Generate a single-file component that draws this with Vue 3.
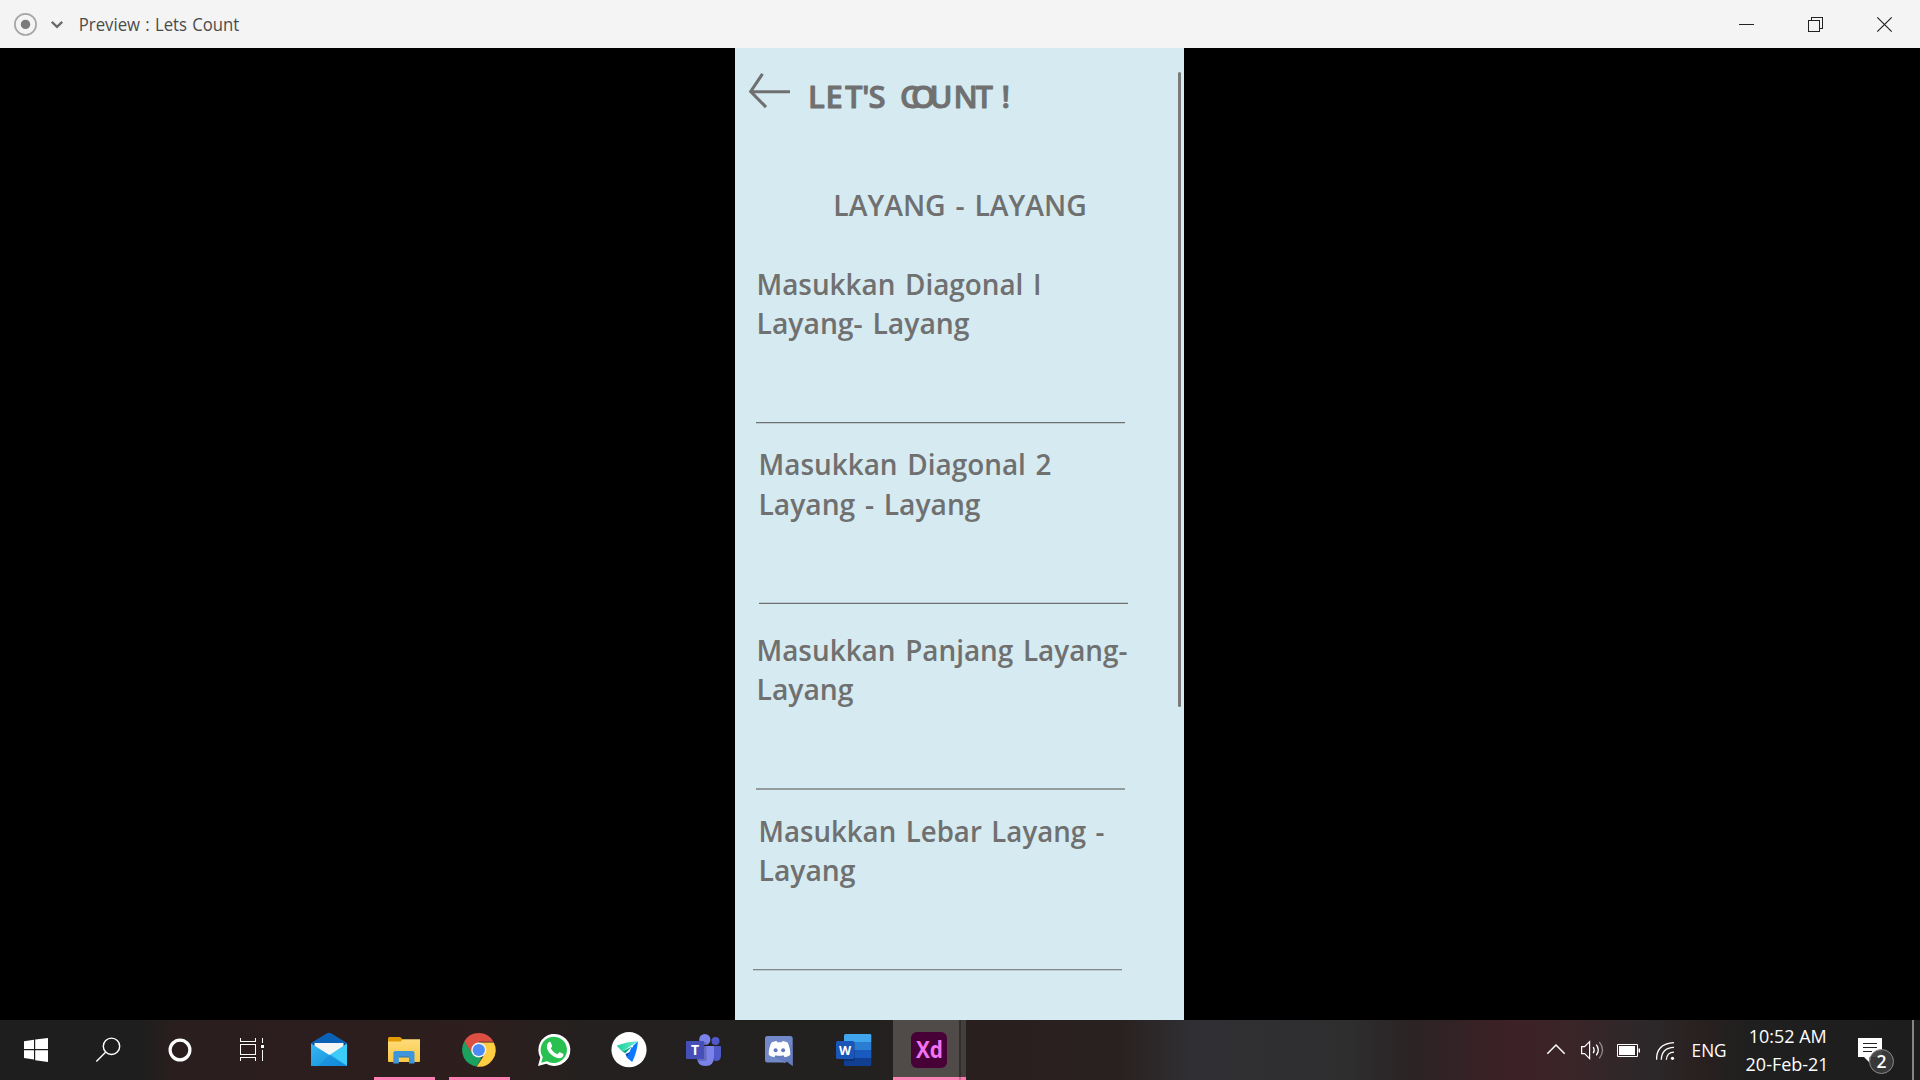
<script setup>
// Each line carries its drawn width so the label keeps the prototype's metrics.
const fields = [
  { id: 'd1', lines: [{ text: 'Masukkan Diagonal I', width: 285 }, { text: 'Layang- Layang', width: 213 }] },
  { id: 'd2', lines: [{ text: 'Masukkan Diagonal 2', width: 293 }, { text: 'Layang - Layang', width: 222 }] },
  { id: 'panjang', lines: [{ text: 'Masukkan Panjang Layang-', width: 371 }, { text: 'Layang', width: 97 }] },
  { id: 'lebar', lines: [{ text: 'Masukkan Lebar Layang -', width: 346 }, { text: 'Layang', width: 97 }] }
]
</script>

<template>
  <div class="screen">
    <header class="titlebar">
      <svg width="76" height="48" viewBox="0 0 76 48" fill="none">
        <circle cx="25.5" cy="24.4" r="10.6" stroke="#a6a6a6" stroke-width="1.7" />
        <circle cx="25.5" cy="24.4" r="4.7" fill="#7b7b7b" />
        <path d="M51.8 21.8 57 26.8 62.2 21.8" stroke="#6a6a6a" stroke-width="2.3" />
      </svg>
      <svg class="ui" width="200" height="48" viewBox="76 0 200 48">
        <text class="caption" x="78.8" y="31" font-size="18.6" fill="#4b4b4b" textLength="160.5" lengthAdjust="spacingAndGlyphs">Preview : Lets Count</text>
      </svg>
      <svg class="window-buttons" width="207" height="48" viewBox="1713 0 207 48" fill="none" stroke="#222" shape-rendering="crispEdges">
        <path d="M1739 24.5h15" />
        <path d="M1808.5 20.5h11v11h-11zM1811.5 20v-2.5h11v11h-2.5" />
        <path d="M1877.3 17.3l14.4 14.4M1891.7 17.3l-14.4 14.4" stroke-width="1.2" shape-rendering="auto" />
      </svg>
    </header>

    <main class="stage">
      <section class="phone">
        <div class="content">
          <svg class="heading" width="430" height="92" viewBox="735 48 430 92">
            <path d="M762.5 73.8 750.7 91.5 766 107.2M750.7 91.7H790" fill="none" stroke="#707070" stroke-width="3.1" />
            <text class="comic" y="107.6" x="808 825.5 845 862 868.5 880 900 911 929.5 953.5 975.5 1001.5 1020.5">LET'S COUNT!</text>
          </svg>
          <svg class="shape-name" width="449" height="80" viewBox="735 140 449 80">
            <text x="833.3" y="215.6" textLength="253.5" lengthAdjust="spacingAndGlyphs">LAYANG - LAYANG</text>
          </svg>
          <div v-for="f in fields" :key="f.id" class="field" :class="f.id">
            <svg v-for="(l, i) in f.lines" :key="i" class="line" width="390" height="39">
              <text x=".5" y="30" :textLength="l.width" lengthAdjust="spacingAndGlyphs">{{ l.text }}</text>
            </svg>
            <div class="rule"></div>
          </div>
        </div>
        <div class="scroll"><i></i></div>
      </section>
    </main>

    <footer class="taskbar">
      <svg width="72" height="60" viewBox="0 0 72 60">
        <path fill="#fff" d="M24 21.2 34 19.8V29H24zM35.2 19.6 48 17.9V29H35.2zM24 30.2h10v9.3L24 38.1zM35.2 30.2H48V42l-12.8-1.8z" />
      </svg>
      <svg width="72" height="60" viewBox="72 0 72 60" fill="none" stroke="#fff" stroke-width="1.4">
        <circle cx="111.5" cy="26.3" r="8.2" /><path d="M105.6 32.2 96.3 41.6" />
      </svg>
      <svg width="72" height="60" viewBox="144 0 72 60">
        <circle cx="180" cy="30" r="9.9" fill="none" stroke="#fff" stroke-width="3.2" />
      </svg>
      <svg width="75" height="60" viewBox="216 0 75 60" fill="none" stroke="#fff" shape-rendering="crispEdges">
        <path d="M240.5 18v3.5h15V18M240.5 24.5h15v10h-15zM240.5 41v-3.5h15V41M262.5 18v5M262.5 29.5V41" />
        <path fill="#fff" stroke="none" d="M261 25h3v3h-3z" />
      </svg>

      <svg width="75" height="60" viewBox="291 0 75 60">
        <defs>
          <linearGradient id="mailBody" x1="0" y1="0" x2="1" y2="1"><stop stop-color="#36b8f0" /><stop offset="1" stop-color="#118bdc" /></linearGradient>
        </defs>
        <path fill="#0b61b5" d="M311 23 327 13.3q2-1.2 4 0L347 23l-2 8h-32z" />
        <path fill="#074488" d="M313 23h32v9h-32z" />
        <path fill="#f5f5f5" d="M314.5 23h29v7L329 38l-14.500-8z" />
        <path fill="#3bccf7" d="M347 23.5V46L322 40z" />
        <path fill="url(#mailBody)" d="M311 23.5 347 46H311z" />
        <path fill="#1688d8" d="M330 34.5 347 45.8V46h-29z" opacity=".55" />
      </svg>
      <svg class="running" width="75" height="60" viewBox="366 0 75 60">
        <defs>
          <linearGradient id="folder" x1="0" y1="0" x2="0" y2="1"><stop stop-color="#ffdc79" /><stop offset="1" stop-color="#f9c846" /></linearGradient>
        </defs>
        <path fill="#e19c05" d="M389 17h11l3 2.500V25h-15v-7z" />
        <path fill="url(#folder)" d="M388 21.5h12.500l2.500-2.200h17V41q0 1-1 1h-30q-1 0-1-1z" />
        <path fill="#3d96dc" d="M393.300 43.400V33q0-2 2-2h17.200q2 0 2 2v10.400H409V36.200h-10.200v7.200z" />
        <path fill="#1f76bd" d="M398.800 36.200H409v1.300h-10.200z" />
        <path fill="#ff80b3" d="M374 57h61v3h-61z" />
      </svg>
      <svg width="75" height="60" viewBox="441 0 75 60">
        <path fill="#dd4f43" d="M464.200 21.500A16.800 16.800 0 0 1 493.400 21.700H479l-6.500 12.500z" />
        <path fill="#1ba261" d="M464.300 21.500 472.700 34l6 3.300 3 .5-5 8.800A16.800 16.800 0 0 1 464.300 21.500z" />
        <path fill="#ffcd41" d="M479 22.400h14.800A16.800 16.800 0 0 1 476.700 46.700L485.500 33z" />
        <circle cx="478.800" cy="30" r="7.600" fill="#f1f1f1" /><circle cx="478.800" cy="30" r="6.100" fill="#4c8bf5" />
        <path fill="#ff80b3" d="M449 57h61v3h-61z" />
      </svg>
      <svg width="75" height="60" viewBox="516 0 75 60">
        <path fill="#fff" d="M538 46l2.300-8.400A16 16 0 1 1 546.200 43.700z" />
        <path fill="#28c151" d="M541.200 42.700l1.600-5.500A13.200 13.200 0 1 1 547 41.200z" />
        <path fill="#fff" d="M548.700 22.300c.8-.8 1.700-.6 2.100.2l1.300 3.200c.3.800-.8 1.900-1.300 2.500 1.500 3.100 3.900 4.900 6.700 6 .7-.6 1.400-2 2-2 1 .1 3 1.100 3.800 1.700.6.500-.3 3-1.900 3.800-2 .9-4.400.5-7.600-1.200-3.300-1.800-5.800-5.100-6.700-7.700-.7-2.500.1-5.300 1.600-6.500z" />
      </svg>
      <svg width="75" height="60" viewBox="591 0 75 60">
        <defs>
          <linearGradient id="wing"><stop stop-color="#18cf9d" /><stop offset="1" stop-color="#69efcf" /></linearGradient>
        </defs>
        <circle cx="629" cy="29.700" r="17.600" fill="#fff" />
        <path fill="url(#wing)" d="M616.700 25.700q10-4 21.300-4.400L622.300 31.400z" />
        <path fill="#07a887" d="M622.300 31.400 632 26.500l-6.700 6.700z" />
        <path fill="#0b78ff" d="M638 21.300q-1 11-5.800 20.700l-5.200-4.300 4.500-10.500z" />
        <path fill="#0749bb" d="M627 37.700l3-5.700-4.500 2z" />
        <circle cx="632" cy="26.500" r="1" fill="#fff" />
      </svg>
      <svg class="glyph" width="75" height="60" viewBox="666 0 75 60">
        <circle cx="715.500" cy="21" r="4" fill="#5059c9" />
        <path fill="#5059c9" d="M711 26h9q1 0 1 1v8.500q0 6-6.500 5.500z" />
        <circle cx="704.800" cy="19.500" r="5.600" fill="#7b83eb" />
        <path fill="#7b83eb" d="M697 26h16q1 0 1 1v10q0 9-8.500 9T697 37z" />
        <path fill="#000" opacity=".18" d="M697 22h8q1.500 0 1.500 1.500v16q0 1.500-1.500 1.500h-7.500z" />
        <rect x="686" y="21" width="18" height="18" rx="1" fill="#464eb8" />
        <text x="695" y="34.800" font-size="14" text-anchor="middle">T</text>
      </svg>
      <svg width="75" height="60" viewBox="741 0 75 60">
        <path fill="#7289c9" d="M767.500 16h22.700q2.500 0 2.500 2.500V46l-6-4.500-1.500 1.500-2-.4h-15.700q-2.500 0-2.500-2.500V18.500q0-2.500 2.500-2.500z" />
        <path fill="#5f74b6" d="M789 24l3.700 4v18l-6-4.500-1 .8-12-5.300z" opacity=".6" />
        <path fill="#fff" d="M771.500 22.500q3-1.500 5-1.500l.8 1.300h4.500l.8-1.300q2 0 5 1.500 3 5.500 2.600 12.500-2.700 2-5.500 2.200l-1.300-2q-4 1-7.800 0l-1.300 2q-2.800-.2-5.500-2.200-.4-7 2.700-12.500z" />
        <circle cx="775.600" cy="30.200" r="2" fill="#6477bd" /><circle cx="783.100" cy="30.200" r="2" fill="#6477bd" />
      </svg>
      <svg class="glyph" width="75" height="60" viewBox="816 0 75 60">
        <path fill="#41a5ee" d="M845.500 14H870q1.300 0 1.300 1.300V22H844v-6.500q0-1.500 1.500-1.500z" />
        <path fill="#2b7cd3" d="M844 22h27.300v8H844z" /><path fill="#185abd" d="M844 30h27.300v8H844z" />
        <path fill="#103f91" d="M844 38h27.300v6.700q0 1.300-1.300 1.300h-24.500q-1.500 0-1.500-1.500z" />
        <path fill="#000" opacity=".2" d="M844 22h11v17q0 2-2 2h-9z" />
        <rect x="836" y="21" width="18.300" height="18" rx="1.500" fill="#1a56b8" />
        <text x="845.100" y="34.600" font-size="12.500" text-anchor="middle">W</text>
      </svg>
      <svg class="glyph" width="75" height="60" viewBox="891 0 75 60">
        <path fill="#504b49" d="M893 0h66v60h-66z" /><path fill="#312e2d" d="M959 0h2v60h-2z" /><path fill="#433f3e" d="M961 0h5v60h-5z" />
        <rect x="911" y="12" width="36" height="36" rx="6" fill="#470137" />
        <text class="xd" x="916" y="38" font-size="22.500" textLength="27" lengthAdjust="spacingAndGlyphs">Xd</text>
        <path fill="#ff84b5" d="M893 57h66v3h-66z" /><path fill="#c9688f" d="M959 57h2v3h-2z" /><path fill="#f57eac" d="M961 57h5v3h-5z" />
      </svg>

      <svg class="tray ui" width="380" height="60" viewBox="1540 0 380 60" fill="none" stroke="#fff">
        <path stroke-width="1.500" d="M1547.300 33.700 1556 25l8.700 8.700" />
        <path stroke-width="1.200" d="M1581.600 26.600h3l5-5v17l-5-5h-3z" />
        <path stroke-width="1.300" d="M1593.200 27q2 3 0 6.200M1596.300 24.700q4 5.300 0 10.700" />
        <path stroke-width="1.300" opacity=".45" d="M1599.300 22q6.500 8 0 16.300" />
        <path d="M1617.500 24.500h20v12h-20z" /><path fill="#fff" stroke="none" d="M1619 26h16v9h-16zM1638.500 28.500h1.500v4h-1.500z" />
        <path stroke-width="1.300" d="M1656.600 39.800q-.5-16 17.400-17.200M1661.300 39.800q.3-12 12.700-12.400M1666.300 39.800q.5-7.500 7.700-7.700" />
        <circle cx="1672.500" cy="38.300" r="1.600" fill="#fff" stroke="none" />
        <g fill="#fff" stroke="none" font-size="18">
          <text x="1691.600" y="36.800" textLength="35" lengthAdjust="spacingAndGlyphs">ENG</text>
          <text x="1748.700" y="23" textLength="78" lengthAdjust="spacingAndGlyphs">10:52 AM</text>
          <text x="1745.600" y="51" textLength="83" lengthAdjust="spacingAndGlyphs">20-Feb-21</text>
        </g>
        <path fill="#fff" stroke="none" d="M1858 18h24v19h-12.500v5.500L1864 37h-6z" />
        <path stroke="#222" d="M1863 23.500h14M1863 27.500h14M1863 31.500h9" />
        <circle cx="1881.500" cy="41.500" r="12" fill="#3a3a3a" fill-opacity=".93" stroke="#8b8b8b" />
        <text x="1881.400" y="47.800" fill="#fff" stroke="none" font-size="17.500" font-weight="600" text-anchor="middle">2</text>
        <path stroke="#858585" stroke-width="2" d="M1913 0v60" />
      </svg>
    </footer>
  </div>
</template>

<style>
body { margin: 0; overflow: hidden; background: #000; }
</style>

<style scoped>
.screen { width: 1920px; height: 1080px; display: flex; flex-direction: column; background: #000; font-family: "Open Sans", "Noto Sans", sans-serif; }
svg { display: block; flex: none; }
.titlebar { height: 48px; flex: none; display: flex; background: #f4f4f4; }
.window-buttons { margin-left: auto; }
.ui text { font-family: "Open Sans", "Noto Sans", sans-serif; }
.caption { word-spacing: 1px; }
.stage { height: 972px; display: flex; padding-left: 735px; }
.phone { width: 449px; display: flex; background: #d5ebf1; color: #707070; overflow: hidden; }
.content { width: 443px; }
.comic { font-family: "Comic Sans MS", "Open Sans", sans-serif; font-size: 31px; font-weight: 600; fill: #707070; stroke: #707070; stroke-width: .9px; stroke-linejoin: round; }
.shape-name text, .line text { font-size: 29px; font-weight: 600; fill: #707070; word-spacing: 2.5px; }
.line, .shape-name { overflow: visible; }
.field { width: 372px; height: 158px; margin-left: 21px; }
.rule { width: 369px; height: 1px; margin-top: 79px; background: #707070; box-shadow: 0 1px rgba(112, 112, 112, .25); }
.d1 { margin-top: 45px; height: 180px; }
.d2 { margin-left: 23px; height: 186px; }
.d2 .line + .line { margin-top: 1px; }
.d2 .rule { margin-left: 1px; box-shadow: 0 -1px rgba(112, 112, 112, .25); }
.panjang { height: 181px; }
.panjang .rule { height: 2px; background: #949c9e; box-shadow: none; }
.lebar { margin-left: 23px; }
.lebar .rule { margin-left: -5px; background: #838788; }
.scroll { padding-top: 24px; }
.scroll i { display: block; width: 3px; height: 635px; border-radius: 2px; background: #7b7b7b; }
.taskbar { height: 60px; flex: none; display: flex; background: linear-gradient(90deg, #1e1e1e 0, #1f1e1e 140px, #2b1e1e 180px, #2e1e1e 480px, #23201f 590px, #222120 860px, #291f1e 970px, #292120 1120px, #302f33 1190px, #2e2e2f 1350px, #2b2324 1410px, #3d2127 1510px, #3a2529 1570px, #2c2829 1650px, #2a2020 1700px, #1f1f1f 1750px, #1d1d1d 1920px); }
.tray { margin-left: auto; }
.glyph text { font-family: "Open Sans", sans-serif; font-weight: 700; fill: #fff; }
.glyph .xd { fill: #f572f5; }
</style>
